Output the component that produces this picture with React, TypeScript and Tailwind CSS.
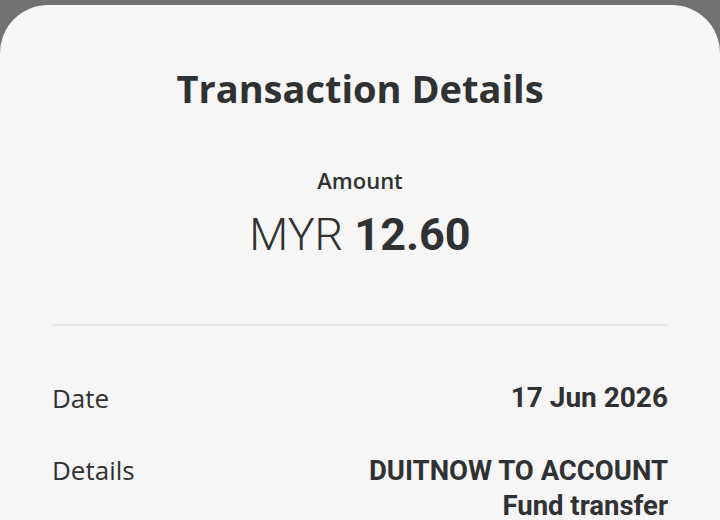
import React from "react";

export default function App() {
  return (
    <div className="w-[720px] h-[520px] bg-[#727272] pt-[5px] overflow-hidden">
      <div className="h-full bg-[#f6f6f6] rounded-t-[48px] px-[52px]">
        <h1
          className="text-center text-[38px] font-bold text-[#2f3133] pt-[60px] leading-[46px]"
          style={{ fontFamily: '"Open Sans", sans-serif' }}
        >
          Transaction Details
        </h1>
        <div
          className="mt-[54px] text-center text-[22px] font-semibold text-[#2f3133] leading-[30px]"
          style={{ fontFamily: '"Open Sans", sans-serif' }}
        >
          Amount
        </div>
        <div
          className="mt-[14px] text-center text-[45px] leading-[52px] text-[#2f3133]"
          style={{ fontFamily: "Roboto, sans-serif" }}
        >
          <span className="font-light">MYR</span>{" "}
          <span className="font-bold">12.60</span>
        </div>
        <div className="mt-[63px] h-[2px] bg-[#e8e8e8]" />
        <div className="mt-[55px] flex justify-between items-start">
          <div
            className="text-[26px] text-[#2f3133] leading-[34px]"
            style={{ fontFamily: '"Open Sans", sans-serif' }}
          >
            Date
          </div>
          <div
            className="text-[28px] font-bold text-[#2f3133] leading-[34px] text-right"
            style={{ fontFamily: "Roboto, sans-serif" }}
          >
            17 Jun 2026
          </div>
        </div>
        <div className="mt-[38px] flex justify-between items-start">
          <div
            className="text-[26px] text-[#2f3133] leading-[34px]"
            style={{ fontFamily: '"Open Sans", sans-serif' }}
          >
            Details
          </div>
          <div
            className="text-[27.5px] font-bold text-[#2f3133] leading-[35px] text-right"
            style={{ fontFamily: "Roboto, sans-serif" }}
          >
            <div>DUITNOW TO ACCOUNT</div>
            <div>Fund transfer</div>
          </div>
        </div>
      </div>
    </div>
  );
}
